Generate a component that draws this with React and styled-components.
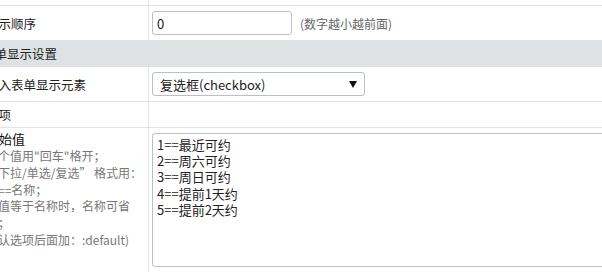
import React from 'react'
import styled, { createGlobalStyle } from 'styled-components'

const Global = createGlobalStyle`
  html, body { margin: 0; padding: 0; background: #fff; }
  body { font-family: "Noto Sans CJK SC", "Liberation Sans", sans-serif; }
`

const Frame = styled.div`
  width: 602px;
  height: 272px;
  overflow: hidden;
`

const Table = styled.div`
  margin-left: -21px;
  width: 1000px;
`

const Row = styled.div`
  display: grid;
  grid-template-columns: 170px 1fr;
  height: ${p => p.h}px;
  border-bottom: ${p => (p.line ? '1px solid #e3e3e3' : 'none')};
`

const Label = styled.div`
  border-right: 1px solid #e3e3e3;
  padding-left: 7px;
  display: flex;
  align-items: ${p => (p.top ? 'flex-start' : 'center')};
  flex-direction: ${p => (p.top ? 'column' : 'row')};
  padding-top: ${p => (p.top ? '2px' : '0')};
  font-size: 12.5px;
  color: #222;
  white-space: nowrap;
`

const Value = styled.div`
  display: flex;
  align-items: ${p => (p.top ? 'flex-start' : 'center')};
  padding: ${p => (p.top ? '5px 0 0 3px' : '0 0 0 3px')};
  gap: 8px;
`

const Section = styled.div`
  height: 27px;
  background: #dfe2e5;
  padding-left: 3px;
  display: flex;
  align-items: center;
  font-size: 12.5px;
  color: #222;
`

const Input = styled.input`
  box-sizing: border-box;
  width: 140px;
  height: 24px;
  border: 1px solid #b9c0cb;
  border-radius: 3px;
  padding: 0 4px;
  font: 13px "Noto Sans CJK SC", "Liberation Sans", sans-serif;
  color: #222;
  outline: none;
`

const Hint = styled.span`
  font-size: 12px;
  color: #666;
`

const Select = styled.div`
  box-sizing: border-box;
  width: 213px;
  height: 24px;
  border: 1px solid #b9c0cb;
  border-radius: 3px;
  padding: 0 7px;
  display: flex;
  align-items: center;
  justify-content: space-between;
  font-size: 13px;
  color: #222;
`

const LabelTitle = styled.div`
  line-height: 18px;
  font-size: 13px;
  color: #111;
`

const Help = styled.div`
  font-size: 12px;
  line-height: 16.8px;
  color: #777;
`

const TextArea = styled.textarea`
  box-sizing: border-box;
  width: 800px;
  height: 134px;
  border: 1px solid #b9c0cb;
  border-radius: 3px;
  padding: 3px 4px;
  font: 13px/16.2px "Noto Sans CJK SC", "Liberation Sans", sans-serif;
  color: #222;
  resize: none;
  outline: none;
`

const helpLines = [
  '多个值用"回车"格开；',
  '（下拉/单选/复选” 格式用：',
  '值==名称；',
  '若值等于名称时，名称可省',
  '略；',
  '默认选项后面加：:default)',
]

export default function App() {
  return (
    <Frame>
      <Global />
      <Table>
        <Row h={5} line>
          <Label />
          <Value />
        </Row>
        <Row h={34}>
          <Label>显示顺序</Label>
          <Value>
            <Input defaultValue="0" />
            <Hint>(数字越小越前面)</Hint>
          </Value>
        </Row>
        <Section>表单显示设置</Section>
        <Row h={34} line>
          <Label>录入表单显示元素</Label>
          <Value>
            <Select>
              <span>复选框(checkbox)</span>
              <svg width="8" height="7" viewBox="0 0 8 7">
                <path d="M0 0h8L4 7z" fill="#111" />
              </svg>
            </Select>
          </Value>
        </Row>
        <Row h={25} line>
          <Label>选项</Label>
          <Value />
        </Row>
        <Row h={150}>
          <Label top>
            <LabelTitle>初始值</LabelTitle>
            <Help>
              {helpLines.map(l => (
                <div key={l}>{l}</div>
              ))}
            </Help>
          </Label>
          <Value top>
            <TextArea
              defaultValue={'1==最近可约\n2==周六可约\n3==周日可约\n4==提前1天约\n5==提前2天约'}
            />
          </Value>
        </Row>
      </Table>
    </Frame>
  )
}
